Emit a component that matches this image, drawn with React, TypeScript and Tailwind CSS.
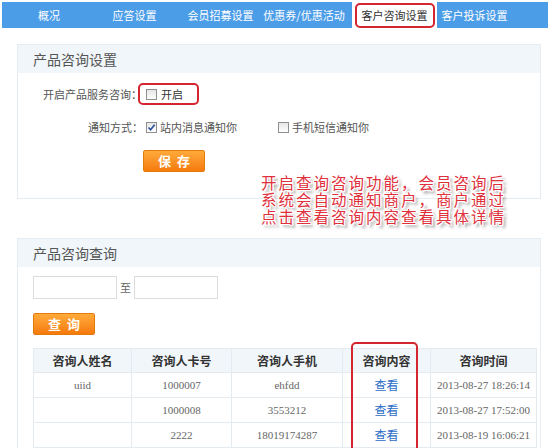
import React from "react"

const cjk = { fontFamily: '"Noto Sans CJK SC", "Noto Sans", sans-serif' }
const serif = { fontFamily: '"Liberation Serif", "Noto Sans CJK SC", serif' }

const tabs = [
  { label: "概况", w: "w-[74px]" },
  { label: "应答设置", w: "w-[97px]" },
  { label: "会员招募设置", w: "w-[75px]" },
  { label: "优惠券/优惠活动", w: "w-[92px] mr-[2px]" },
  { label: "客户咨询设置", w: "w-[85px]", active: true },
  { label: "客户投诉设置", w: "w-[75px]" },
]

const rows = [
  { name: "uiid", card: "1000007", phone: "ehfdd", time: "2013-08-27 18:26:14" },
  { name: "", card: "1000008", phone: "3553212", time: "2013-08-27 17:52:00" },
  { name: "", card: "2222", phone: "18019174287", time: "2013-08-19 16:06:21" },
]

function Box({ checked }: { checked?: boolean }) {
  return (
    <span className="inline-flex w-[11px] h-[11px] border border-[#8f8f8f] bg-gradient-to-b from-[#e6e6e6] to-white items-center justify-center shrink-0">
      {checked && (
        <svg width="9" height="9" viewBox="0 0 9 9">
          <path d="M1.5 4.5 L3.6 6.8 L7.6 1.8" stroke="#2a4f9c" strokeWidth="1.6" fill="none" />
        </svg>
      )}
    </span>
  )
}

function OrangeBtn({ text, className }: { text: string; className: string }) {
  return (
    <div className={"flex items-center justify-center rounded-[2px] border border-[#e57a0c] bg-gradient-to-b from-[#ffaa3a] to-[#f57a08] text-white font-bold text-[13px] tracking-[6px] pl-[6px] " + className}>
      {text}
    </div>
  )
}

const App = () => {
  return (
    <div className="relative w-[558px] h-[448px] overflow-hidden bg-white text-[#555]" style={cjk}>
      {/* top nav */}
      <div className="mt-[2px] ml-[2px] w-[546px] h-[26px] bg-[#4c9de8] flex pl-[10px]">
        {tabs.map((t) => (
          <div
            key={t.label}
            className={
              "flex items-center justify-center text-[11px] whitespace-nowrap " +
              t.w +
              (t.active ? " bg-white h-[31px] text-[#333]" : " text-white")
            }
          >
            {t.active ? (
              <span className="border-2 border-[#d3262f] rounded-[5px] px-[5px] h-[25px] -mt-[5px] flex items-center">
                {t.label}
              </span>
            ) : (
              t.label
            )}
          </div>
        ))}
      </div>

      {/* panel 1 */}
      <div className="mx-[17px] mt-[16px] h-[155px] border border-[#e6edf2]">
        <div className="h-[28px] bg-[#f1f6fa] flex items-center pl-[15px] text-[14px] text-[#555]">产品咨询设置</div>
        <div className="h-[42px] flex items-center pl-[25px] text-[11px]">
          <span>开启产品服务咨询：</span>
          <span className="ml-[-4px] flex items-center gap-[4px] border-2 border-[#d3262f] rounded-[5px] h-[22px] pl-[6px] pr-[14px]">
            <Box />
            <span className="text-[#333]">开启</span>
          </span>
        </div>
        <div className="h-[24px] flex items-center pl-[70px] text-[11px]">
          <span>通知方式：</span>
          <span className="ml-[3px] flex items-center gap-[3px]">
            <Box checked />
            <span>站内消息通知你</span>
          </span>
          <span className="ml-[41px] flex items-center gap-[3px]">
            <Box />
            <span>手机短信通知你</span>
          </span>
        </div>
        <div className="pl-[125px] pt-[11px]">
          <OrangeBtn text="保存" className="w-[62px] h-[22px]" />
        </div>
      </div>

      {/* panel 2 */}
      <div className="mx-[17px] mt-[39px] h-[220px] border border-[#e6edf2]">
        <div className="h-[28px] bg-[#f1f6fa] flex items-center pl-[15px] text-[14px] text-[#555]">产品咨询查询</div>
        <div className="flex items-center pl-[15px] pt-[9px] gap-[3px] text-[11px]">
          <div className="w-[84px] h-[23px] border border-[#dcdcdc]" />
          <span className="text-[#666]">至</span>
          <div className="w-[84px] h-[23px] border border-[#dcdcdc]" />
        </div>
        <div className="pl-[15px] pt-[14px]">
          <OrangeBtn text="查询" className="w-[62px] h-[22px]" />
        </div>
        <table className="ml-[15px] mt-[13px] w-[504px] border-collapse text-[11px]">
          <thead>
            <tr className="h-[24px] bg-[#f1f6fa] text-[#333] text-[12px]">
              <th className="w-[98px] border border-[#e4ebf0] font-bold">咨询人姓名</th>
              <th className="w-[100px] border border-[#e4ebf0] font-bold">咨询人卡号</th>
              <th className="w-[111px] border border-[#e4ebf0] font-bold">咨询人手机</th>
              <th className="w-[88px] border border-[#e4ebf0] font-bold">咨询内容</th>
              <th className="border border-[#e4ebf0] font-bold">咨询时间</th>
            </tr>
          </thead>
          <tbody>
            {rows.map((r, i) => (
              <tr key={i} className="h-[25px] text-center text-[#666]">
                <td className="border border-[#e4ebf0]" style={serif}>{r.name}</td>
                <td className="border border-[#e4ebf0]" style={serif}>{r.card}</td>
                <td className="border border-[#e4ebf0]" style={serif}>{r.phone}</td>
                <td className="border border-[#e4ebf0] text-[#2b6bc4] text-[12px]">查看</td>
                <td className="border border-[#e4ebf0]" style={serif}>{r.time}</td>
              </tr>
            ))}
          </tbody>
        </table>
      </div>

      {/* red outline around 咨询内容 column */}
      <div className="absolute left-[351px] top-[342px] w-[67px] h-[112px] border-2 border-[#d3262f] rounded-[5px] pointer-events-none" />

      {/* annotation */}
      <div
        className="absolute left-[261px] top-[175px] text-[15.5px] leading-[17px] tracking-[2px] text-[#e0303c] whitespace-nowrap [text-shadow:1px_0_0_#fff,-1px_0_0_#fff,0_1px_0_#fff,0_-1px_0_#fff,1px_1px_0_#fff,-1px_-1px_0_#fff,1px_-1px_0_#fff,-1px_1px_0_#fff,3px_3px_3px_rgba(0,0,0,0.45)]"
        style={serif}
      >
        <div>开启查询咨询功能，会员咨询后</div>
        <div>系统会自动通知商户，商户通过</div>
        <div>点击查看咨询内容查看具体详情</div>
      </div>
    </div>
  )
}

export default App
